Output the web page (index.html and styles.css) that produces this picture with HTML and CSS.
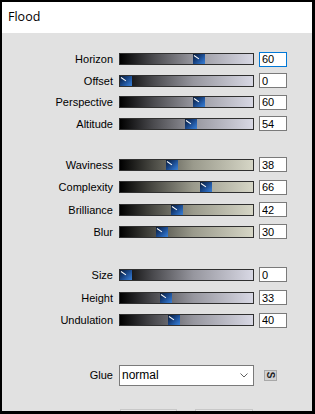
FILE: index.html
```html
<!DOCTYPE html>
<html lang="en">
<head>
    <meta charset="UTF-8">
    <meta name="viewport" content="width=device-width, initial-scale=1.0">
    <title>Flood</title>
    <link rel="stylesheet" href="styles.css">
</head>
<body>
    <div class="window">
        <div class="titlebar">Flood</div>

        <div class="content">
            <!-- 第一組 -->
            <div class="group group-a">
                <div class="row"><label>Horizon</label><div class="track"><span class="thumb" style="left:72.6px"></span></div><input class="value focused" type="text" value="60"></div>
                <div class="row"><label>Offset</label><div class="track"><span class="thumb" style="left:0px"></span></div><input class="value" type="text" value="0"></div>
                <div class="row"><label>Perspective</label><div class="track"><span class="thumb" style="left:72.6px"></span></div><input class="value" type="text" value="60"></div>
                <div class="row"><label>Altitude</label><div class="track"><span class="thumb" style="left:65.3px"></span></div><input class="value" type="text" value="54"></div>
            </div>

            <!-- 第二組 -->
            <div class="group group-b">
                <div class="row"><label>Waviness</label><div class="track beige"><span class="thumb" style="left:46px"></span></div><input class="value" type="text" value="38"></div>
                <div class="row"><label>Complexity</label><div class="track beige"><span class="thumb" style="left:79.9px"></span></div><input class="value" type="text" value="66"></div>
                <div class="row"><label>Brilliance</label><div class="track beige"><span class="thumb" style="left:50.8px"></span></div><input class="value" type="text" value="42"></div>
                <div class="row"><label>Blur</label><div class="track beige"><span class="thumb" style="left:36.3px"></span></div><input class="value" type="text" value="30"></div>
            </div>

            <!-- 第三組 -->
            <div class="group group-c">
                <div class="row"><label>Size</label><div class="track"><span class="thumb" style="left:0px"></span></div><input class="value" type="text" value="0"></div>
                <div class="row"><label>Height</label><div class="track"><span class="thumb" style="left:39.9px"></span></div><input class="value" type="text" value="33"></div>
                <div class="row"><label>Undulation</label><div class="track"><span class="thumb" style="left:48.4px"></span></div><input class="value" type="text" value="40"></div>
            </div>

            <div class="glue-row">
                <label>Glue</label>
                <div class="select">
                    <span>normal</span>
                    <svg width="8" height="5" viewBox="0 0 8 5"><path d="M0.5 0.5 L4 4 L7.5 0.5" fill="none" stroke="#606060" stroke-width="1"/></svg>
                </div>
                <button class="s-btn"><span>S</span></button>
            </div>

            <!-- 底部按鈕（被視窗邊緣裁切） -->
            <div class="buttons">
                <button class="btn"></button>
                <button class="btn second"></button>
            </div>
        </div>
    </div>
</body>
</html>
```

FILE: styles.css
```css
body {
    margin: 0;
    background: #000;
    font-family: "Liberation Sans", Arial, sans-serif;
}
.window {
    width: 315px;
    height: 414px;
    box-sizing: border-box;
    border-style: solid;
    border-color: #000;
    border-width: 2px 3px 3px 2px;
    background: #e1e1e1;
    overflow: hidden;
}
.titlebar {
    height: 31px;
    background: #fff;
    padding-left: 6px;
    font-family: "Open Sans", "Noto Sans", sans-serif;
    font-size: 12.5px;
    line-height: 30px;
    color: #000;
}
.content {
    padding-top: 15.25px;
}
.row {
    display: flex;
    align-items: center;
    height: 21.5px;
}
.group-a {
    margin-bottom: 19.6px;
}
.group-b {
    margin-bottom: 20.6px;
}
.group-b .row {
    height: 22.3px;
}
.group-c {
    margin-bottom: 32.75px;
}
.group-c .row {
    height: 22.7px;
}
label {
    width: 111px;
    text-align: right;
    font-size: 11px;
    color: #000;
    margin-right: 6px;
}
.track {
    position: relative;
    width: 135px;
    height: 12px;
    box-sizing: border-box;
    border: 1px solid #303030;
    background: linear-gradient(to right, #000 0%, #4a4a4e 25%, #96969e 55%, #d8d8e4 100%);
}
.track.beige {
    background: linear-gradient(to right, #000 0%, #4a4a44 25%, #9a9a8c 55%, #d6d6c6 100%);
}
.thumb {
    position: absolute;
    top: 0;
    width: 12px;
    height: 10px;
    background: linear-gradient(135deg, #0a1a33 0%, #163f7c 40%, #2a67b8 75%, #3b80d2 100%);
}
.thumb::before {
    content: '';
    position: absolute;
    left: 1px;
    top: 1px;
    width: 6px;
    height: 1px;
    background: #fff;
    transform: rotate(35deg);
    transform-origin: left center;
}
.value {
    width: 28px;
    height: 15px;
    box-sizing: border-box;
    margin: 0 0 0 5px;
    padding: 0 2px;
    border: 1px solid #7a7a7a;
    background: #fff;
    font-family: "Liberation Sans", Arial, sans-serif;
    font-size: 11px;
    color: #000;
    outline: none;
}
.value.focused {
    border-color: #0078d7;
}
.glue-row {
    display: flex;
    align-items: center;
    height: 22px;
}
.select {
    width: 135px;
    height: 21px;
    box-sizing: border-box;
    border: 1px solid #7a7a7a;
    background: #fff;
    display: flex;
    align-items: center;
    justify-content: space-between;
    padding: 0 5px 0 2px;
    font-size: 12px;
    color: #000;
}
.s-btn {
    width: 13px;
    height: 11px;
    margin-left: 10px;
    padding: 0;
    border: 1px solid #a8a8a8;
    background: #d2d2d2;
    display: flex;
    align-items: center;
    justify-content: center;
    font-family: "Liberation Sans", Arial, sans-serif;
    font-size: 10px;
    font-weight: bold;
    color: #222;
}
.s-btn span {
    display: block;
    transform: rotate(90deg);
    line-height: 10px;
}
.buttons {
    display: flex;
    gap: 18px;
    margin-top: 23px;
    padding-left: 118px;
}
.btn {
    width: 57px;
    height: 23px;
    border: 1px solid #c8c8c8;
    background: #e8e8e8;
}
.btn.second {
    width: 58px;
}
```
